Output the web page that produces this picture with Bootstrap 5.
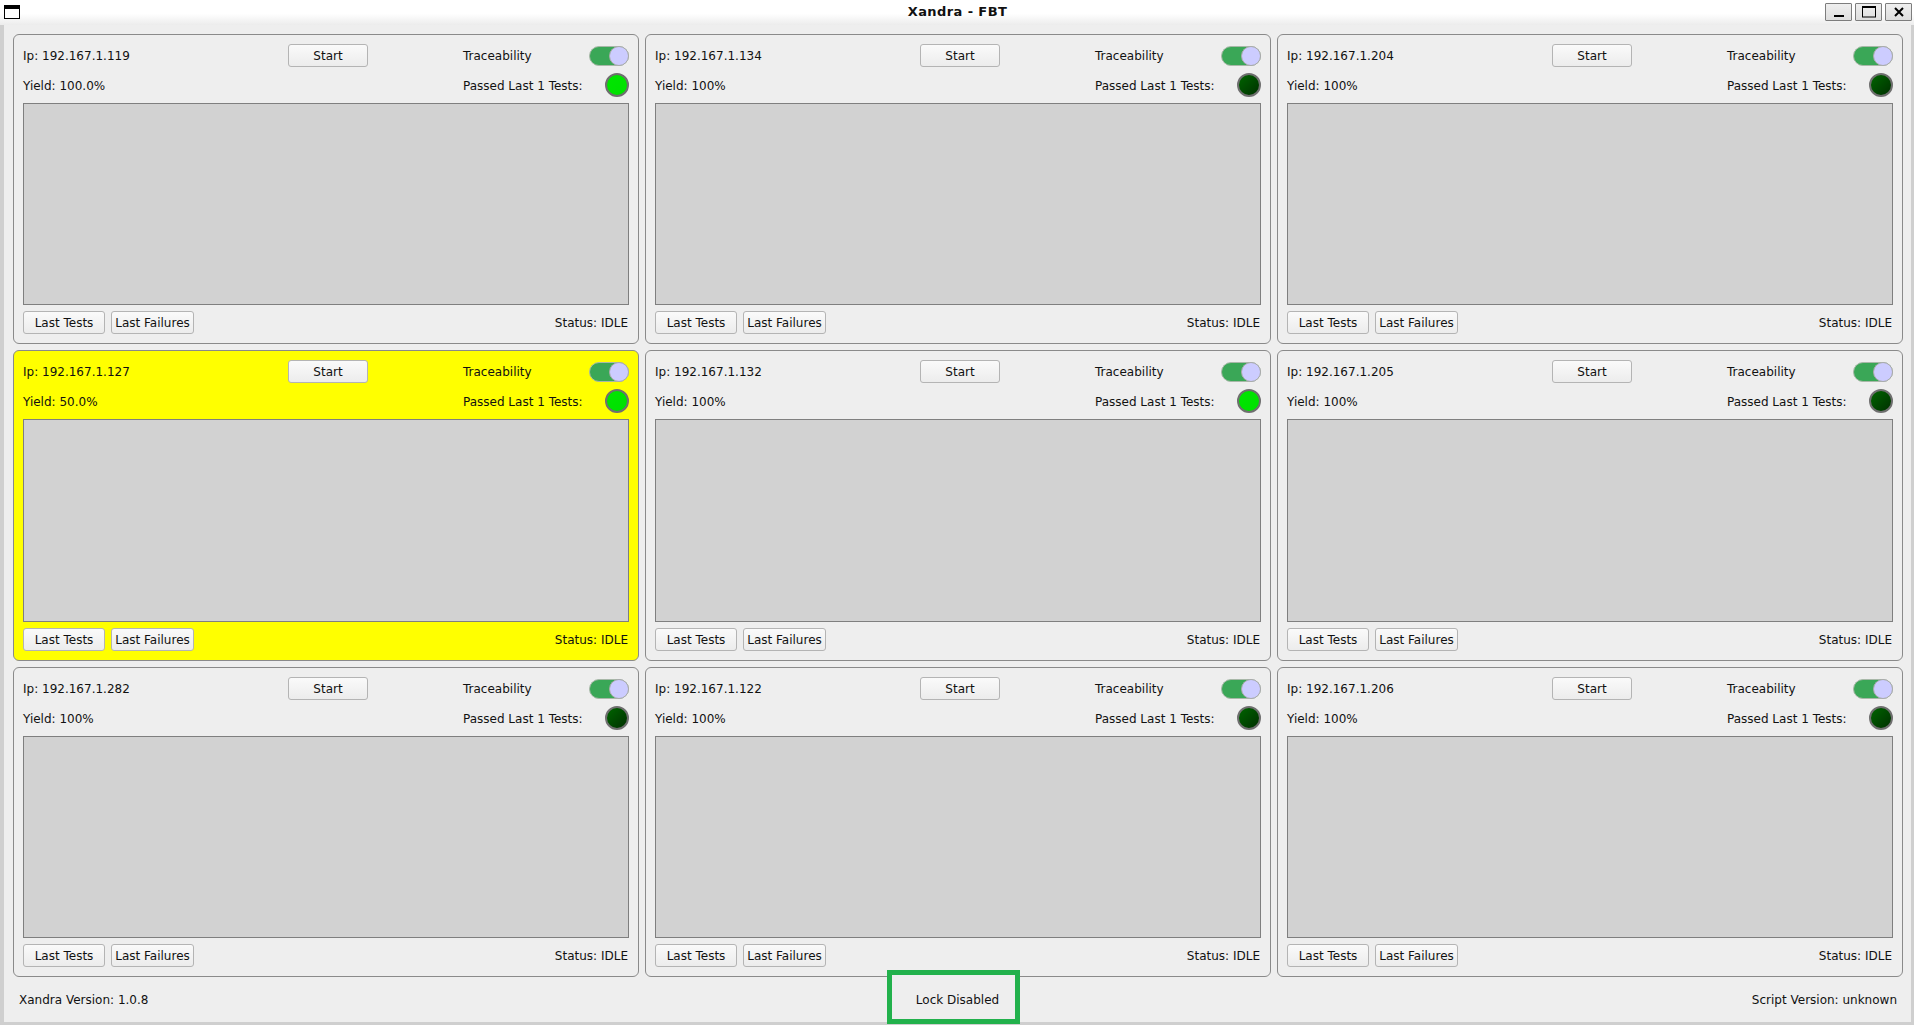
<!DOCTYPE html>
<html lang="en">
<head>
<meta charset="utf-8">
<title>Xandra - FBT</title>
<link href="https://cdn.jsdelivr.net/npm/bootstrap@5.3.0/dist/css/bootstrap.min.css" rel="stylesheet">
<style>
html,body{height:100%;margin:0;overflow:hidden}
body{font-family:"DejaVu Sans",sans-serif;font-size:12px;color:#111;background:#cfcfcf;display:flex;flex-direction:column;width:1914px;height:1025px}
.xw-title{height:25px;flex:none;background:linear-gradient(#fff 0,#fff 55%,#ececec 100%);position:relative}
.xw-name{font-weight:700;font-size:13px;letter-spacing:.4px;line-height:23px;text-align:center;color:#111;padding-left:1px}
.xw-appicon{position:absolute;left:4px;top:5px;width:16px;height:14px;border:1px solid #000;border-top-width:4px;background:#fff}
.xw-ctrls{position:absolute;right:2px;top:3px;gap:3px}
.xw-ctrl{width:27px;height:18px;background:linear-gradient(#efefef,#dedede);border:1px solid #7d7d7d;border-radius:1px;padding:0;display:flex;align-items:center;justify-content:center}
.xw-main{flex:1;margin:0 3px 3px 4px;background:#eee;display:flex;flex-direction:column;min-height:0;padding:9px 8px 0 9px}
.xw-grid{display:grid;grid-template-columns:repeat(3,626px);grid-template-rows:310px 311px 310px;gap:6px}
.xw-card{border:1px solid #8a8a8a;border-radius:6px;background:#eee;padding:9px 9px 0 9px;display:flex;flex-direction:column}
.xw-card.xw-warn{background:#ff0}
.xw-top{display:grid;grid-template-columns:265px 80px 95px 1fr;align-items:center;flex:none}
.xw-r1{height:22px}
.xw-r2{height:37px}
.xw-lbl{padding-top:2px}
.xw-start,.xw-sm{font-size:12px;font-family:inherit;color:#111;background:linear-gradient(#fafafa,#ececec);border:1px solid #b4b4b4;border-radius:3px;padding:0;height:23px;line-height:20px}
.xw-start{width:80px}
.xw-sm{width:82px}
.xw-sm.xw-wide{width:83px}
.xw-toggle{width:40px;height:20px;border-radius:10px;background:#3aa757;border:1px solid #a8b8a8;position:relative}
.xw-toggle::after{content:"";position:absolute;right:-1px;top:-1px;width:20px;height:20px;border-radius:50%;background:#ccccff;border:1px solid #aaa}
.xw-led{width:24px;height:24px;border-radius:50%;border:2px solid #6f6f6f;background:linear-gradient(135deg,#00e600,#00e000)}
.xw-led.xw-off{background:linear-gradient(135deg,#006400,#003000)}
.xw-log{flex:1;min-height:0;background:#d2d2d2;border:1px solid #7f7f7f}
.xw-bot{margin:6px 0 9px;height:23px;flex:none;gap:6px}
.xw-status{padding-right:1px}
.xw-foot{position:relative;height:44px;padding:2px 6px 0 6px}
.xw-lock{position:absolute;left:874px;top:-7px;width:133px;height:54px;padding:6px 0 0 8px;border:5px solid #22b14c;background:#eee;display:flex;align-items:center;justify-content:center}
</style>
</head>
<body>
<div class="xw-title">
  <div class="xw-appicon"></div>
  <div class="xw-name">Xandra - FBT</div>
  <div class="xw-ctrls d-flex">
    <button class="xw-ctrl" aria-label="Minimize"><svg width="12" height="12" viewBox="0 0 12 12"><rect x="1" y="9" width="10" height="2" fill="#000"/></svg></button>
    <button class="xw-ctrl" aria-label="Maximize"><svg width="14" height="12" viewBox="0 0 14 12"><rect x=".5" y="1" width="13" height="10" fill="none" stroke="#000"/><rect x="0" y="0" width="14" height="2" fill="#000"/></svg></button>
    <button class="xw-ctrl" aria-label="Close"><svg width="12" height="12" viewBox="0 0 12 12"><path d="M2 2l8 8M10 2l-8 8" stroke="#000" stroke-width="2"/></svg></button>
  </div>
</div>
<div class="xw-main">
  <div class="xw-grid" id="grid"></div>
  <div class="xw-foot d-flex align-items-center justify-content-between">
    <span>Xandra Version: 1.0.8</span>
    <div class="xw-lock">Lock Disabled</div>
    <span>Script Version: unknown</span>
  </div>
</div>
<script src="https://cdn.jsdelivr.net/npm/bootstrap@5.3.0/dist/js/bootstrap.bundle.min.js"></script>
<script>
const units=[["192.167.1.119","100.0%",1,0],["192.167.1.134","100%",0,0],["192.167.1.204","100%",0,0],
["192.167.1.127","50.0%",1,1],["192.167.1.132","100%",1,0],["192.167.1.205","100%",0,0],
["192.167.1.282","100%",0,0],["192.167.1.122","100%",0,0],["192.167.1.206","100%",0,0]];
document.getElementById('grid').innerHTML=units.map(u=>`
<div class="xw-card${u[3]?' xw-warn':''}">
  <div class="xw-top xw-r1"><span>Ip: ${u[0]}</span><button class="xw-start">Start</button><span></span>
    <div class="d-flex justify-content-between align-items-center"><span>Traceability</span><div class="xw-toggle"></div></div></div>
  <div class="xw-top xw-r2"><span class="xw-lbl">Yield: ${u[1]}</span><span></span><span></span>
    <div class="d-flex justify-content-between align-items-center"><span class="xw-lbl">Passed Last 1 Tests:</span><div class="xw-led${u[2]?'':' xw-off'}"></div></div></div>
  <div class="xw-log"></div>
  <div class="xw-bot d-flex align-items-center"><button class="xw-sm">Last Tests</button><button class="xw-sm xw-wide">Last Failures</button><span class="ms-auto xw-status">Status: IDLE</span></div>
</div>`).join('');
</script>
</body>
</html>
